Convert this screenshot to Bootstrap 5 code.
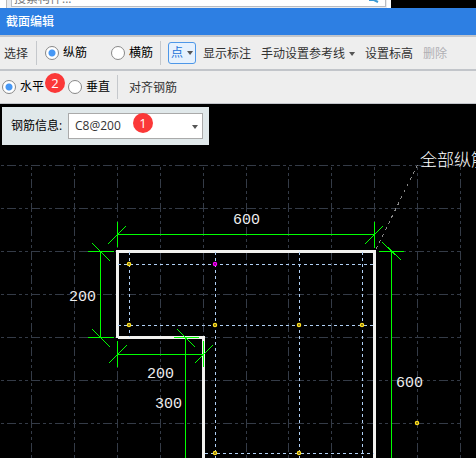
<!DOCTYPE html>
<html lang="zh-CN">
<head>
<meta charset="utf-8">
<meta name="viewport" content="width=device-width, initial-scale=1">
<title>截面编辑</title>
<link href="https://cdn.jsdelivr.net/npm/bootstrap@5.3.0/dist/css/bootstrap.min.css" rel="stylesheet">
<style>
body{font:12px/16px "Open Sans","Noto Sans CJK SC",sans-serif;color:#222;background:#000}
.search-strip{height:8px;background:#e9ebee;width:391px;border-right:4px solid #fff;border-left:6px solid #fff;box-shadow:inset 1px 0 #bbb}
.search-field{height:24px;line-height:16px;margin:-17px 1px 0 5px;border:1px solid #b9bcc2;border-radius:0;padding:6px 2px 0;font-size:12px;width:375px;color:#777;background:#fff}
.search-field::placeholder{color:#777;opacity:1}
.title-bar{height:27px;background:#2d7fe3;color:#fff;padding-left:6px}
.title-bar h1{font-size:12px;line-height:16px;margin:0}
.tool-row{height:34px;background:#eee;border-top:2px solid #c2c5ca;white-space:nowrap;padding-left:4px}
.tool-row.last-row{height:35px;border-bottom:1px solid #c2c5ca;padding-left:2px}
.tool-row .btn,.tool-row label{font-size:12px;line-height:16px;border-radius:0;padding:2px 0 0;border:0}
.tool-row .btn{color:#333}
.tool-row .btn:disabled{color:#b0aeb4;opacity:1}
.tool-row label{color:#000;padding:0}
.divider{width:1px;height:24px;background:#c5c8cc;margin:0 8px}
.divider.tight{margin:0 7px}
.actions{gap:10px;margin-left:7px}
.tool-row .form-check-input{width:14px;height:14px;margin:0 4px 0 0;border:1px solid #888;background:#fff;flex:none}
.tool-row .form-check-input:checked{background:radial-gradient(circle,#4798f5 3px,#fff 4px)}
.tool-row .form-check-input.second{margin-left:24px}
.tool-row .btn.point-btn{border:1px solid #4d97e8;border-radius:3px;background:#e6f1fd;color:#1c73d8;width:28px;height:22px;padding:0 2px}
.caret{width:6px;height:4px;background:#555;clip-path:polygon(0 0,100% 0,50% 100%);display:inline-block;flex:none}
.step-badge{width:20px;height:20px;border-radius:50%;background:#fb3838;color:#fff;font-size:13px;line-height:20px;text-align:center;position:absolute;z-index:2}
.step-two{left:45px;top:2px}
.step-one{left:65px;top:0}
.canvas-area{min-height:0}
.drawing{position:absolute;inset:0;width:100%;height:100%}
.info-panel{background:#e0e8ea;width:207px;height:38px;margin:3px 0 0 2px;padding:0 6px 0 9px}
.info-panel label{color:#000}
.info-select{appearance:none;width:135px;height:26px;border:1px solid #aaa;border-radius:0;background:#fff;color:#333;font-size:12px;padding:0 6px}
.select-caret{position:absolute;right:5px;top:12px;pointer-events:none}
.dim-text text{font:15px "Liberation Mono",monospace;fill:#eee}
.note-text{font:17px "Noto Sans CJK SC",sans-serif;font-weight:300;fill:#fff}
</style>
<script src="https://cdn.jsdelivr.net/npm/bootstrap@5.3.0/dist/js/bootstrap.bundle.min.js"></script>
</head>
<body class="d-flex flex-column vh-100 overflow-hidden">
<div class="search-strip overflow-hidden position-relative flex-shrink-0">
<input class="search-field d-block" type="text" placeholder="搜索构件..." aria-label="搜索构件">
<svg class="position-absolute top-0 end-0 me-2" width="10" height="3" aria-hidden="true"><path d="M0 0h5l4 2" stroke="#3b9ad3" stroke-width="2" fill="none"/></svg>
</div>
<header class="title-bar d-flex align-items-center flex-shrink-0"><h1>截面编辑</h1></header>
<div class="tool-row d-flex align-items-center flex-shrink-0">
<button class="btn" type="button">选择</button>
<span class="divider"></span>
<input class="form-check-input" type="radio" name="kind" id="kindV" checked><label for="kindV">纵筋</label>
<input class="form-check-input second" type="radio" name="kind" id="kindH"><label for="kindH">横筋</label>
<span class="divider tight"></span>
<button class="btn point-btn d-flex align-items-center justify-content-between" type="button">点<span class="caret"></span></button>
<div class="actions d-flex align-items-center">
<button class="btn" type="button">显示标注</button>
<button class="btn d-flex align-items-center gap-1" type="button">手动设置参考线<span class="caret"></span></button>
<button class="btn" type="button">设置标高</button>
<button class="btn" type="button" disabled>删除</button>
</div>
</div>
<div class="tool-row last-row d-flex align-items-center position-relative flex-shrink-0">
<input class="form-check-input" type="radio" name="dir" id="dirH" checked><label for="dirH">水平</label>
<span class="step-badge step-two">2</span>
<input class="form-check-input second" type="radio" name="dir" id="dirV"><label for="dirV">垂直</label>
<span class="divider tight"></span>
<button class="btn ms-1" type="button">对齐钢筋</button>
</div>
<main class="canvas-area flex-grow-1 position-relative overflow-hidden">
<svg class="drawing" viewBox="0 104 476 354" preserveAspectRatio="xMinYMin slice" shape-rendering="crispEdges" role="img" aria-label="截面配筋图">
<g stroke="#343b47" stroke-dasharray="9 3 3 3 3 3">
<path stroke-dashoffset="17" d="M0 165.500H460M0 208.500H460M0 251.500H460M0 294.500H460M0 337.500H460M0 380.500H460M0 423.500H460"/>
<path stroke-dashoffset="10" d="M31.500 165V458M74.500 165V458M117.500 165V458M160.500 165V458M203.500 165V458M246.500 165V458M288.500 165V458M331.500 165V458M374.500 165V458M417.500 165V458M460.500 165V458"/>
</g>
<path d="M117.500 338V251.500H374.500V458M117.500 337.500H203.500V458" fill="none" stroke="#f2f2ef" stroke-width="3" stroke-linejoin="round"/>
<path d="M118 264.500H374M118 325.500H374M205 453.500H374M129.500 252V337M215.500 252V458M299.500 252V458M362.500 252V458" fill="none" stroke="#b0d0f5" stroke-dasharray="3 3"/>
<path d="M117 234.500H375M100.500 251V338M117 354.500H204M185.500 337V458M391.500 251V458M117.500 222V247M374.500 222V248M88 251.500H114M88 337.500H114M174 337.500H199M117.500 341V367M203.500 341V367M379 251.500H404M108 244L126 226M365 244L383 226M92 243L110 261M92 329L110 347M177 329L195 347M109 363L127 345M195 363L213 345M382 242L401 260" fill="none" stroke="#00ff00"/>
<path d="M376 249L419 162" stroke="#888" stroke-dasharray="3 4"/>
<g fill="#000" stroke="#ffe020" stroke-width="1.500" shape-rendering="auto">
<circle cx="129" cy="264" r="1.500"/><circle cx="129" cy="325" r="1.500"/><circle cx="215" cy="325" r="1.500"/><circle cx="299" cy="325" r="1.500"/><circle cx="362" cy="325" r="1.500"/><circle cx="215" cy="453" r="1.500"/><circle cx="299" cy="453" r="1.500"/><circle cx="417" cy="423" r="1.500"/><circle cx="215" cy="264" r="1.500" stroke="#f0f"/>
</g>
<g class="dim-text"><text x="233" y="224">600</text><text x="69" y="301">200</text><text x="147" y="378">200</text><text x="155" y="408">300</text><text x="396" y="387">600</text></g>
<text class="note-text" x="420" y="166">全部纵筋</text>
</svg>
<div class="info-panel position-relative d-flex align-items-center justify-content-between">
<label for="barInfo">钢筋信息:</label>
<div class="position-relative">
<select class="info-select d-block" id="barInfo"><option>C8@200</option></select>
<span class="caret select-caret"></span>
<span class="step-badge step-one">1</span>
</div>
</div>
</main>
</body>
</html>
